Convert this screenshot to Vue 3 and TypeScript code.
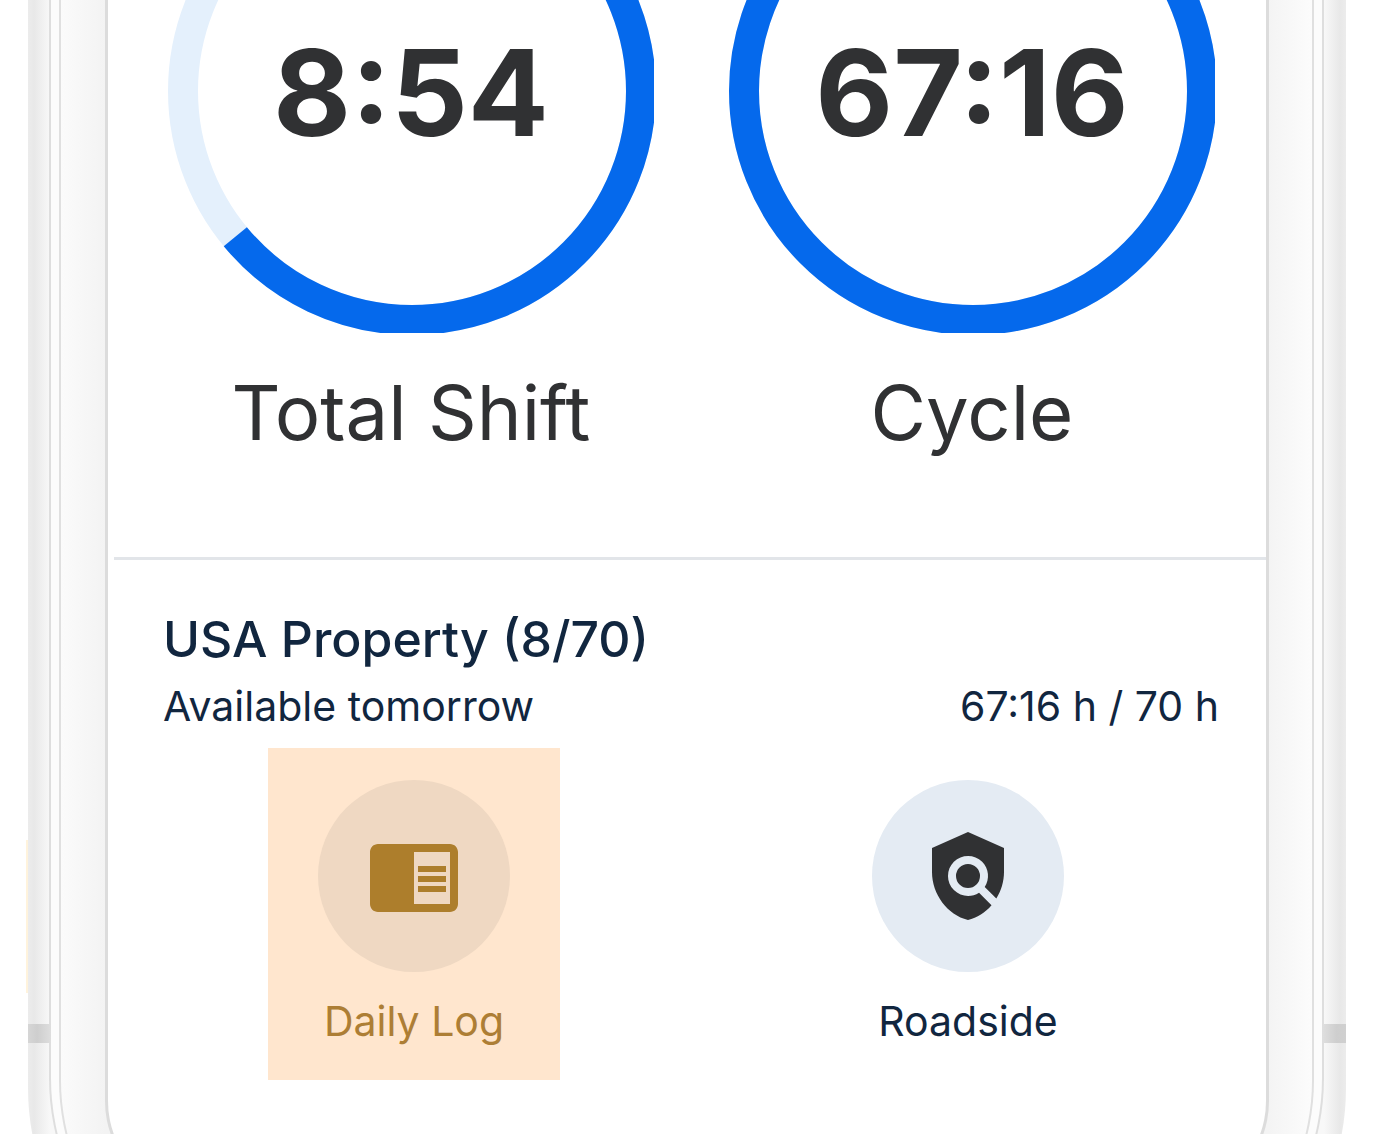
<script setup lang="ts">
interface Dial {
  label: string
  time: string
  progress: number
}

interface Action {
  label: string
  icon: string
  highlighted: boolean
}

const RADIUS = 229
const CIRCUMFERENCE = 2 * Math.PI * RADIUS

const dials: Dial[] = [
  { label: 'Total Shift', time: '8:54', progress: 0.64 },
  { label: 'Cycle', time: '67:16', progress: 0.961 },
]

const actions: Action[] = [
  {
    label: 'Daily Log',
    highlighted: true,
    icon: 'M13 12h7v1.5h-7zm0-2.5h7V11h-7zm0 5h7V16h-7zM21 4H3c-1.1 0-2 .9-2 2v13c0 1.1.9 2 2 2h18c1.1 0 2-.9 2-2V6c0-1.1-.9-2-2-2zm0 15h-9V6h9v13z',
  },
  {
    label: 'Roadside',
    highlighted: false,
    icon: 'M21 5l-9-4-9 4v6c0 5.55 3.84 10.74 9 12 2.3-.56 4.33-1.9 5.88-3.71l-3.12-3.12c-1.94 1.29-4.58 1.07-6.29-.64-1.95-1.95-1.95-5.12 0-7.07 1.95-1.95 5.12-1.95 7.07 0 1.71 1.71 1.92 4.35.64 6.29l2.9 2.9C20.29 15.69 21 13.38 21 11V5zM12 9a3 3 0 1 0 0 6 3 3 0 0 0 0-6z',
  },
]

const dash = (progress: number): string =>
  `${CIRCUMFERENCE * progress} ${CIRCUMFERENCE}`
</script>

<template>
  <div class="stage">
    <div class="device">
      <span class="side-key"></span>
      <span class="antenna antenna-left"></span>
      <span class="antenna antenna-right"></span>
      <div class="band">
        <div class="bezel">
          <main class="screen">
            <section class="dials">
              <figure v-for="dial in dials" :key="dial.label" class="dial">
                <div class="gauge">
                  <svg class="ring" viewBox="0 0 486 486" aria-hidden="true">
                    <circle class="track" cx="244" cy="244" :r="RADIUS" />
                    <circle
                      class="value"
                      cx="244"
                      cy="244"
                      :r="RADIUS"
                      :stroke-dasharray="dash(dial.progress)"
                      transform="rotate(-90 244 244)"
                    />
                  </svg>
                  <span class="time">{{ dial.time }}</span>
                </div>
                <figcaption class="caption">{{ dial.label }}</figcaption>
              </figure>
            </section>

            <section class="ruleset">
              <h2 class="title">USA Property (8/70)</h2>
              <div class="availability">
                <span>Available tomorrow</span>
                <span>67:16 h / 70 h</span>
              </div>
            </section>

            <nav class="actions">
              <button
                v-for="action in actions"
                :key="action.label"
                type="button"
                class="action"
                :class="{ highlighted: action.highlighted }"
              >
                <span class="disc">
                  <svg class="icon" viewBox="0 0 24 24" aria-hidden="true">
                    <path :d="action.icon" />
                  </svg>
                </span>
                <span class="action-label">{{ action.label }}</span>
              </button>
            </nav>
          </main>
        </div>
      </div>
    </div>
  </div>
</template>

<style>
body {
  margin: 0;
  background: #fff;
}
</style>

<style scoped>
.stage {
  height: 100vh;
  overflow: hidden;
  font-family: Inter, 'Liberation Sans', sans-serif;
}

.device {
  position: relative;
  margin: 0 38px 0 28px;
  padding: 0 22px 20px 21px;
  border-radius: 0 0 250px 250px;
  background: linear-gradient(
    90deg,
    #ececec 0,
    #e8e8e8 6px,
    #f8f8f8 22px,
    #f8f8f8 calc(100% - 22px),
    #e8e8e8 calc(100% - 6px),
    #ececec 100%
  );
}

.side-key {
  position: absolute;
  left: -2px;
  bottom: 345px;
  width: 2px;
  height: 153px;
  background: #fff3dc;
}

.antenna {
  position: absolute;
  z-index: 1;
  bottom: 295px;
  width: 23px;
  height: 19px;
}

.antenna-left {
  left: 0;
  background: linear-gradient(90deg, #d6d6d6, #cecece 40%, #dedede);
}

.antenna-right {
  right: 0;
  background: linear-gradient(90deg, #dedede, #cecece 60%, #d0d0d0);
}

.band {
  padding: 0 8px 8px;
  border: solid #dedede;
  border-width: 0 2px 2px;
  border-radius: 0 0 240px 240px;
  background: #fcfcfc;
}

.bezel {
  padding: 0 43px 105px 44px;
  border: solid #e0e0e0;
  border-width: 0 2px 2px;
  border-radius: 0 0 228px 228px;
  background: linear-gradient(
    90deg,
    #fbfbfb 0,
    #f3f3f3 44px,
    #f4f4f4 calc(100% - 43px),
    #fcfcfc 100%
  );
}

.screen {
  padding-bottom: 118px;
  border: solid #dcdcdc;
  border-width: 0 3px 3px;
  border-radius: 0 0 100px 100px;
  background: #fff;
  overflow: hidden;
}

.dials {
  display: grid;
  grid-template-columns: 1fr 1fr;
  gap: 75px;
  margin: -153px 0 0 6px;
  padding: 0 51px 97px 54px;
  border-bottom: 3px solid #e2e5e9;
}

.dial {
  margin: 0;
  text-align: center;
}

.gauge {
  display: grid;
  place-items: center;
}

.ring,
.time {
  grid-area: 1 / 1;
}

.ring {
  display: block;
  width: 100%;
  overflow: hidden;
}

.track,
.value {
  fill: none;
  stroke-width: 30;
}

.track {
  stroke: #e4f0fc;
}

.value {
  stroke: #0569ec;
}

.time {
  padding-top: 6px;
  color: #303133;
  font-size: 120px;
  font-weight: 700;
  line-height: 144px;
}

.caption {
  margin-top: 31px;
  color: #303133;
  font-size: 76px;
  line-height: 96px;
}

.ruleset {
  padding: 49px 47px 18px 55px;
  color: #11263f;
}

.title {
  margin: 0 0 13px;
  font-size: 50px;
  font-weight: 500;
  line-height: 60px;
}

.availability {
  display: flex;
  justify-content: space-between;
  font-size: 41px;
  line-height: 48px;
}

.actions {
  display: grid;
  grid-template-columns: 1fr 1fr;
  justify-items: center;
  padding: 0 21px 0 29px;
}

.action {
  display: flex;
  flex-direction: column;
  align-items: center;
  gap: 25px;
  min-width: 292px;
  padding: 32px 24px 35px;
  border: 0;
  background: none;
  color: #11263f;
  font-family: inherit;
  font-size: 41px;
  line-height: 48px;
  cursor: pointer;
}

.disc {
  display: grid;
  place-items: center;
  width: 192px;
  height: 192px;
  border-radius: 50%;
  background: #e4ebf3;
}

.icon {
  width: 96px;
  height: 96px;
  fill: #303133;
}

.highlighted {
  background: #ffe6ce;
  color: #ad7e35;
}

.highlighted .disc {
  background: #efd8c2;
}

.highlighted .icon {
  fill: #ad7e2c;
}
</style>
